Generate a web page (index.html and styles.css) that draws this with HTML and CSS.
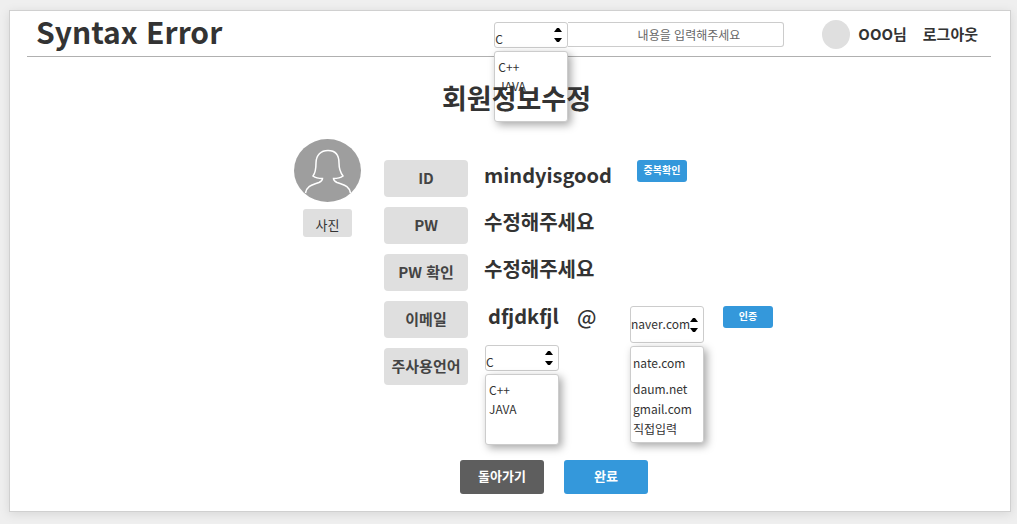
FILE: index.html
```html
<!DOCTYPE html>
<html lang="ko">
<head>
<meta charset="utf-8">
<meta name="viewport" content="width=device-width, initial-scale=1">
<title>Syntax Error</title>
<link rel="stylesheet" href="styles.css">
</head>
<body>
<div class="page">
  <header class="header">
    <h1 class="logo">Syntax Error</h1>
    <form class="search">
      <div class="picker">
        <select class="select select-short" aria-label="검색 언어"><option>C</option><option>C++</option><option>JAVA</option></select>
        <svg class="arrows" viewBox="0 0 8 16" aria-hidden="true"><path d="M3 1h2l3 4H0zM0 11h8l-3 4H3z"/></svg>
        <ul class="menu"><li>C++</li><li>JAVA</li></ul>
      </div>
      <input class="search-input" type="text" placeholder="내용을 입력해주세요" aria-label="검색">
    </form>
    <nav class="user">
      <span class="user-photo"></span>
      <a class="user-link" href="#">OOO님</a>
      <a class="user-link" href="#">로그아웃</a>
    </nav>
  </header>
  <main>
    <h2 class="title">회원정보수정</h2>
    <form class="profile">
      <div class="photo">
        <svg class="avatar" viewBox="0 0 67 63" aria-hidden="true">
          <ellipse cx="33.5" cy="31.5" rx="33.5" ry="31.5" fill="#9e9e9e"/>
          <path d="M11.500 54C13 46 19 46 25 43.500C28 42 28.500 41 28.500 39.500C24 39.500 21 38.500 19 37C22 33 22 28 22 24C22 16 27 11.500 34 11.500S45 16 45 24C45 28 46 33 49 37C47 38.500 44 39.500 39.500 39.500C39.500 41 40 42 43 43.500C49 46 55 46 56.500 54" fill="none" stroke="#fff" stroke-width="1.500"/>
        </svg>
        <button class="photo-button" type="button">사진</button>
      </div>
      <div class="fields">
        <div class="row">
          <label class="label" for="user-id">ID</label>
          <input class="value" id="user-id" type="text" value="mindyisgood">
          <button class="small-button" type="button">중복확인</button>
        </div>
        <div class="row">
          <label class="label" for="pw">PW</label>
          <input class="value" id="pw" type="text" value="수정해주세요">
        </div>
        <div class="row">
          <label class="label" for="pw-check">PW 확인</label>
          <input class="value" id="pw-check" type="text" value="수정해주세요">
        </div>
        <div class="row">
          <label class="label" for="email">이메일</label>
          <input class="value value-email" id="email" type="text" value="dfjdkfjl">
          <span class="at">@</span>
          <div class="domain">
            <div class="picker">
              <select class="select select-tall" aria-label="이메일 도메인"><option>naver.com</option><option>nate.com</option><option>daum.net</option><option>gmail.com</option><option>직접입력</option></select>
              <svg class="arrows arrows-tall" viewBox="0 0 8 16" aria-hidden="true"><path d="M3 1h2l3 4H0zM0 11h8l-3 4H3z"/></svg>
              <ul class="menu menu-domain"><li>nate.com</li><li>daum.net</li><li>gmail.com</li><li>직접입력</li></ul>
            </div>
            <button class="small-button" type="button">인증</button>
          </div>
        </div>
        <div class="row">
          <label class="label" for="language">주사용언어</label>
          <div class="picker picker-language">
            <select class="select select-short" id="language"><option>C</option><option>C++</option><option>JAVA</option></select>
            <svg class="arrows" viewBox="0 0 8 16" aria-hidden="true"><path d="M3 1h2l3 4H0zM0 11h8l-3 4H3z"/></svg>
            <ul class="menu"><li>C++</li><li>JAVA</li></ul>
          </div>
        </div>
      </div>
    </form>
    <div class="actions">
      <button class="button button-back" type="button">돌아가기</button>
      <button class="button" type="button">완료</button>
    </div>
  </main>
</div>
</body>
</html>
```
FILE: styles.css
```css
* { box-sizing: border-box; }
body {
  margin: 0;
  padding: 10px 6px 12px 9px;
  background: #efefef;
  color: #333;
  font-family: "Noto Sans CJK KR", "Noto Sans", sans-serif;
}
button, input, select { font: inherit; color: inherit; margin: 0; }
.page {
  background: #fff;
  border: 1px solid #d0d0d0;
  box-shadow: 0 2px 10px rgba(0, 0, 0, .1);
  padding-bottom: 17px;
}
.header {
  display: flex;
  align-items: center;
  height: 46px;
  margin: 0 19px 0 17px;
  padding: 2px 13px 0 9px;
  border-bottom: 1px solid #b0b0b0;
}
.logo {
  flex: 1;
  margin: 0;
  padding-bottom: 8px;
  font-size: 30px;
  line-height: 36px;
  font-weight: 700;
}
.search { display: flex; width: 290px; }
.search-input {
  flex: 1;
  min-width: 0;
  height: 25px;
  padding: 0 43px 0 0;
  border: 1px solid #ccc;
  border-left: 0;
  border-radius: 0 3px 3px 0;
  background: #fff;
  font-size: 12px;
  text-align: right;
}
.search-input::placeholder { color: #666; opacity: 1; }
.user {
  display: flex;
  align-items: center;
  gap: 16px;
  margin-left: 38px;
}
.user-photo {
  width: 28px;
  height: 29px;
  margin-right: -8px;
  border-radius: 50%;
  background: #dfdfdf;
}
.user-link {
  padding-bottom: 2px;
  color: #333;
  font-size: 15px;
  line-height: 20px;
  font-weight: 700;
  text-decoration: none;
}
.picker { position: relative; width: 74px; }
.select {
  display: block;
  width: 100%;
  appearance: none;
  border: 1px solid #ccc;
  border-radius: 3px;
  background: #fff;
  padding: 0;
  font-size: 12px;
}
.select-short { height: 26px; padding-top: 8px; line-height: 16px; }
.select-tall { height: 37px; padding-bottom: 3px; }
.arrows {
  position: absolute;
  top: 5px;
  right: 6px;
  width: 8px;
  height: 16px;
  pointer-events: none;
}
.arrows-tall { top: 11px; }
.menu {
  position: absolute;
  top: calc(100% + 3px);
  left: 0;
  width: 100%;
  height: 71px;
  margin: 0;
  padding: 5px 3px;
  border: 1px solid #ccc;
  border-radius: 3px;
  background: #fff;
  box-shadow: 3px 3px 8px rgba(0, 0, 0, .35);
  list-style: none;
  font-size: 12px;
  line-height: 19px;
  white-space: nowrap;
}
.menu-domain { height: 97px; padding: 6px 2px; line-height: 20px; }
.menu-domain li:first-child { margin-bottom: 6px; }
.title {
  position: relative;
  z-index: 1;
  margin: 21px 0 0;
  padding-left: 13px;
  font-size: 27px;
  line-height: 40px;
  font-weight: 700;
  text-align: center;
}
.profile {
  display: flex;
  justify-content: center;
  gap: 23px;
  margin-top: 21px;
  padding-left: 47px;
}
.photo {
  display: flex;
  flex-direction: column;
  align-items: center;
  gap: 7px;
}
.avatar { width: 67px; height: 63px; }
.photo-button {
  width: 49px;
  height: 28px;
  padding: 2px 0 0;
  border: 0;
  border-radius: 3px;
  background: #dfdfdf;
  font-size: 13px;
}
.fields {
  display: flex;
  flex-direction: column;
  gap: 10px;
  width: 389px;
  margin-top: 21px;
}
.row { display: flex; align-items: flex-start; height: 37px; }
.label {
  width: 84px;
  border-radius: 4px;
  padding-bottom: 2px;
  background: #dfdfdf;
  color: #444;
  font-size: 15px;
  line-height: 35px;
  font-weight: 700;
  text-align: center;
}
.value {
  width: 136px;
  height: 30px;
  margin-left: 16px;
  padding: 0;
  border: 0;
  background: none;
  font-size: 20px;
  line-height: 30px;
  font-weight: 700;
}
.value-email { width: 73px; margin-left: 20px; }
.at {
  width: 20px;
  margin-left: 16px;
  font-size: 20px;
  line-height: 32px;
  font-weight: 500;
}
.domain {
  display: flex;
  align-items: flex-start;
  gap: 3px;
  margin: 5px 0 0 33px;
}
.picker-language { margin: -3px 0 0 17px; }
.small-button {
  width: 50px;
  height: 22px;
  margin-left: 16px;
  padding: 0 0 3px;
  border: 0;
  border-radius: 3px;
  background: #3498db;
  color: #fff;
  font-size: 10px;
  font-weight: 700;
}
.row > .small-button { margin-left: 17px; }
.actions {
  display: flex;
  justify-content: center;
  gap: 20px;
  margin-top: 75px;
  padding-left: 88px;
}
.button {
  width: 84px;
  height: 34px;
  padding: 0 0 3px;
  border: 0;
  border-radius: 3px;
  background: #3498db;
  color: #fff;
  font-size: 13px;
  font-weight: 700;
}
.button-back { background: #5e5e5e; }
```
